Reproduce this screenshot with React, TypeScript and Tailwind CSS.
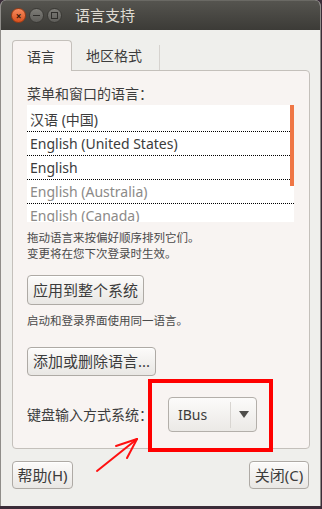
import React from 'react';

const font = { fontFamily: '"Noto Sans", "Noto Sans CJK SC", sans-serif' };

const languages = [
  { name: '汉语 (中国)', active: true },
  { name: 'English (United States)', active: true },
  { name: 'English', active: true },
  { name: 'English (Australia)', active: false },
  { name: 'English (Canada)', active: false },
];

function Button({ label, w, h }: { label: string; w: string; h: string }) {
  return (
    <div
      className={`${w} ${h} flex items-center justify-center rounded-[4px] border border-[#aeaaa5] bg-gradient-to-b from-[#fcfbfa] to-[#e9e7e4] text-[15px] text-[#3c3c3c] shadow-[inset_0_1px_0_#ffffff]`}
    >
      {label}
    </div>
  );
}

export default function App() {
  return (
    <div className="relative w-[322px] h-[509px] overflow-hidden bg-[#3a2c38]" style={font}>
      <div className="w-[321px] h-[506px] rounded-t-[6px] overflow-hidden bg-[#efefec] border-l border-r border-[#8f8d89] flex flex-col">
        {/* title bar */}
        <div className="h-[30px] shrink-0 flex items-center bg-gradient-to-b from-[#55544f] to-[#3c3b37] border-t border-[#6a6964]">
          <div className="flex items-center gap-[3px] pl-[10px]">
            <div className="w-[15px] h-[15px] rounded-full bg-gradient-to-b from-[#f68a5c] to-[#d8501c] border border-[#9a3a14] flex items-center justify-center text-[10px] leading-none text-[#3a1a0a] font-bold">
              ×
            </div>
            <div className="w-[15px] h-[15px] rounded-full bg-gradient-to-b from-[#7d7c77] to-[#5e5d59] border border-[#3a3935] flex items-center justify-center">
              <div className="w-[7px] h-[1.5px] bg-[#2f2e2b]" />
            </div>
            <div className="w-[15px] h-[15px] rounded-full bg-gradient-to-b from-[#7d7c77] to-[#5e5d59] border border-[#3a3935] flex items-center justify-center">
              <div className="w-[7px] h-[7px] border border-[#2f2e2b]" />
            </div>
          </div>
          <div className="ml-[13px] text-[15px] text-[#dfdbd2] leading-none">语言支持</div>
        </div>

        {/* body */}
        <div className="pl-[11px] pt-[10px] flex flex-col">
          {/* tabs */}
          <div className="flex h-[30px] items-stretch">
            <div className="relative z-10 w-[60px] h-[31px] rounded-t-[4px] border border-b-0 border-[#c4c0bb] bg-[#f8f4f2] pl-[14px] flex items-center text-[14px] text-[#3c3c3c]">
              语言
            </div>
            <div className="w-[88px] h-[30px] flex items-center pl-[14px] text-[14px] text-[#3c3c3c]">
              <span className="flex-1">地区格式</span>
              <span className="w-px h-[25px] self-end bg-[#d6d3cf]" />
            </div>
          </div>

          {/* notebook panel */}
          <div className="w-[298px] h-[379px] rounded-b-[4px] rounded-tr-[4px] border border-[#c4c0bb] bg-[#f8f4f2] pl-[14px] pt-[14px] flex flex-col">
            <div className="h-[18px] leading-[18px] text-[14px] text-[#3c3c3c]">菜单和窗口的语言：</div>

            <div className="relative mt-[2px] w-[267px] h-[117px] overflow-hidden bg-white pt-[3px]">
              {languages.map((l) => (
                <div
                  key={l.name}
                  className={`h-[24px] pl-[3px] flex items-center border-b border-dotted border-black text-[14px] ${
                    l.active ? 'text-[#3c3c3c]' : 'text-[#8c8a88]'
                  }`}
                >
                  {l.name}
                </div>
              ))}
              <div className="absolute right-0 top-0 w-[4px] h-[81px] bg-[#ef7645]" />
            </div>

            <div className="mt-[8px] text-[11.5px] leading-[16px] text-[#4a4a4a]">
              <div>拖动语言来按偏好顺序排列它们。</div>
              <div>变更将在您下次登录时生效。</div>
            </div>

            <div className="mt-[13px]">
              <Button label="应用到整个系统" w="w-[117px]" h="h-[30px]" />
            </div>

            <div className="mt-[8px] text-[11.5px] leading-[16px] text-[#4a4a4a]">启动和登录界面使用同一语言。</div>

            <div className="mt-[18px]">
              <Button label="添加或删除语言..." w="w-[129px]" h="h-[29px]" />
            </div>

            <div className="mt-[21px] flex items-center">
              <div className="w-[141px] text-[14px] text-[#3c3c3c]">键盘输入方式系统：</div>
              <div className="w-[89px] h-[35px] rounded-[4px] border border-[#b3afaa] bg-gradient-to-b from-[#fcfbfa] to-[#ebe9e6] flex items-center">
                <span className="pl-[9px] w-[61px] text-[14px] text-[#3c3c3c]">IBus</span>
                <span className="w-px h-[26px] bg-[#d8d5d1]" />
                <span className="flex-1 flex justify-center">
                  <svg width="10" height="7" viewBox="0 0 10 7">
                    <path d="M0 0 L10 0 L5 7 Z" fill="#4f4e4b" />
                  </svg>
                </span>
              </div>
            </div>
          </div>

          {/* bottom buttons */}
          <div className="mt-[12px] w-[297px] flex justify-between">
            <Button label="帮助(H)" w="w-[61px]" h="h-[28px]" />
            <Button label="关闭(C)" w="w-[60px]" h="h-[28px]" />
          </div>
        </div>
      </div>

      {/* annotation */}
      <div className="absolute left-[148px] top-[379px] w-[125px] h-[73px] border-[4px] border-[#ff0000]" />
      <svg className="absolute left-0 top-0" width="322" height="509" viewBox="0 0 322 509">
        <g stroke="#ff1010" strokeWidth="2" strokeLinecap="round" fill="none">
          <path d="M97 471 L137 439" />
          <path d="M137 439 L116 446" />
          <path d="M137 439 L127 458" />
        </g>
      </svg>
    </div>
  );
}
